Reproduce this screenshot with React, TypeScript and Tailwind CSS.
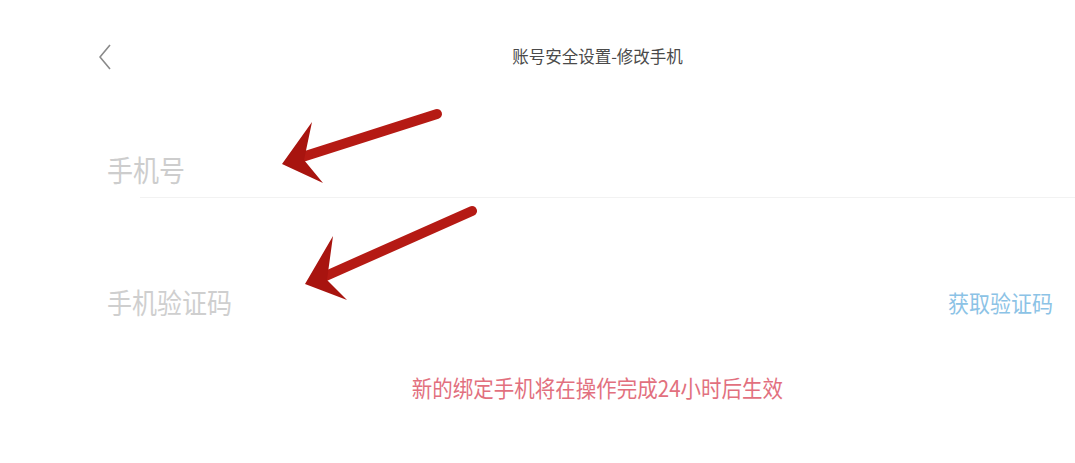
const font = { fontFamily: '"Noto Sans CJK SC", "Noto Sans", sans-serif' }

function Arrow({ tail, tip, wingA, wingB }: { tail: [number, number]; tip: [number, number]; wingA: [number, number]; wingB: [number, number] }) {
  return (
    <g>
      <line x1={tail[0]} y1={tail[1]} x2={tip[0] + 14} y2={tip[1] - 5} stroke="#b51a14" strokeWidth={10} strokeLinecap="round" />
      <polygon
        points={`${tip[0]},${tip[1]} ${wingA[0]},${wingA[1]} ${tip[0] + 22},${tip[1] - 4} ${wingB[0]},${wingB[1]}`}
        fill="#a8140f"
      />
    </g>
  )
}

export default function App() {
  return (
    <div className="relative h-[463px] w-[1075px] overflow-hidden bg-white" style={font}>
      {/* Header */}
      <div className="flex h-[115px] items-start pt-[44px]">
        <div className="flex w-[112px] justify-end">
          <svg width="14" height="26" viewBox="0 0 14 26" fill="none">
            <polyline points="12,1 2,13 12,25" stroke="#8a8a8a" strokeWidth="1.6" strokeLinejoin="round" />
          </svg>
        </div>
        <div className="flex-1 pl-[106px] text-center text-[16.5px] leading-[24px] text-[#4a4a4a]">
          账号安全设置-修改手机
        </div>
        <div className="w-[98px]" />
      </div>

      {/* Phone row */}
      <div className="flex h-[82px] items-center pl-[107px] pt-[28px]">
        <span className="inline-block scale-y-[1.12] text-[26px] leading-none text-[#cdcdcd]">手机号</span>
      </div>
      <div className="ml-[140px] h-px bg-[#f2f2f2]" />

      {/* Code row */}
      <div className="flex h-[140px] items-center justify-between pl-[107px] pr-[22px] pt-[68px]">
        <span className="inline-block scale-y-[1.12] text-[25px] leading-none text-[#cfcfcf]">手机验证码</span>
        <span className="inline-block scale-y-[1.1] text-[21px] leading-none text-[#8cc3e6]">获取验证码</span>
      </div>

      {/* Notice */}
      <div className="flex justify-center pl-[120px] pt-[39px]">
        <span className="inline-block scale-y-[1.1] text-[20.5px] leading-none text-[#e2707e]">新的绑定手机将在操作完成24小时后生效</span>
      </div>

      {/* Annotation arrows */}
      <svg className="pointer-events-none absolute inset-0" width={1075} height={463} viewBox="0 0 1075 463">
        <Arrow tail={[437, 114]} tip={[282, 164]} wingA={[312, 122]} wingB={[323, 183]} />
        <Arrow tail={[472, 211]} tip={[305, 284]} wingA={[333, 236]} wingB={[347, 300]} />
      </svg>
    </div>
  )
}
